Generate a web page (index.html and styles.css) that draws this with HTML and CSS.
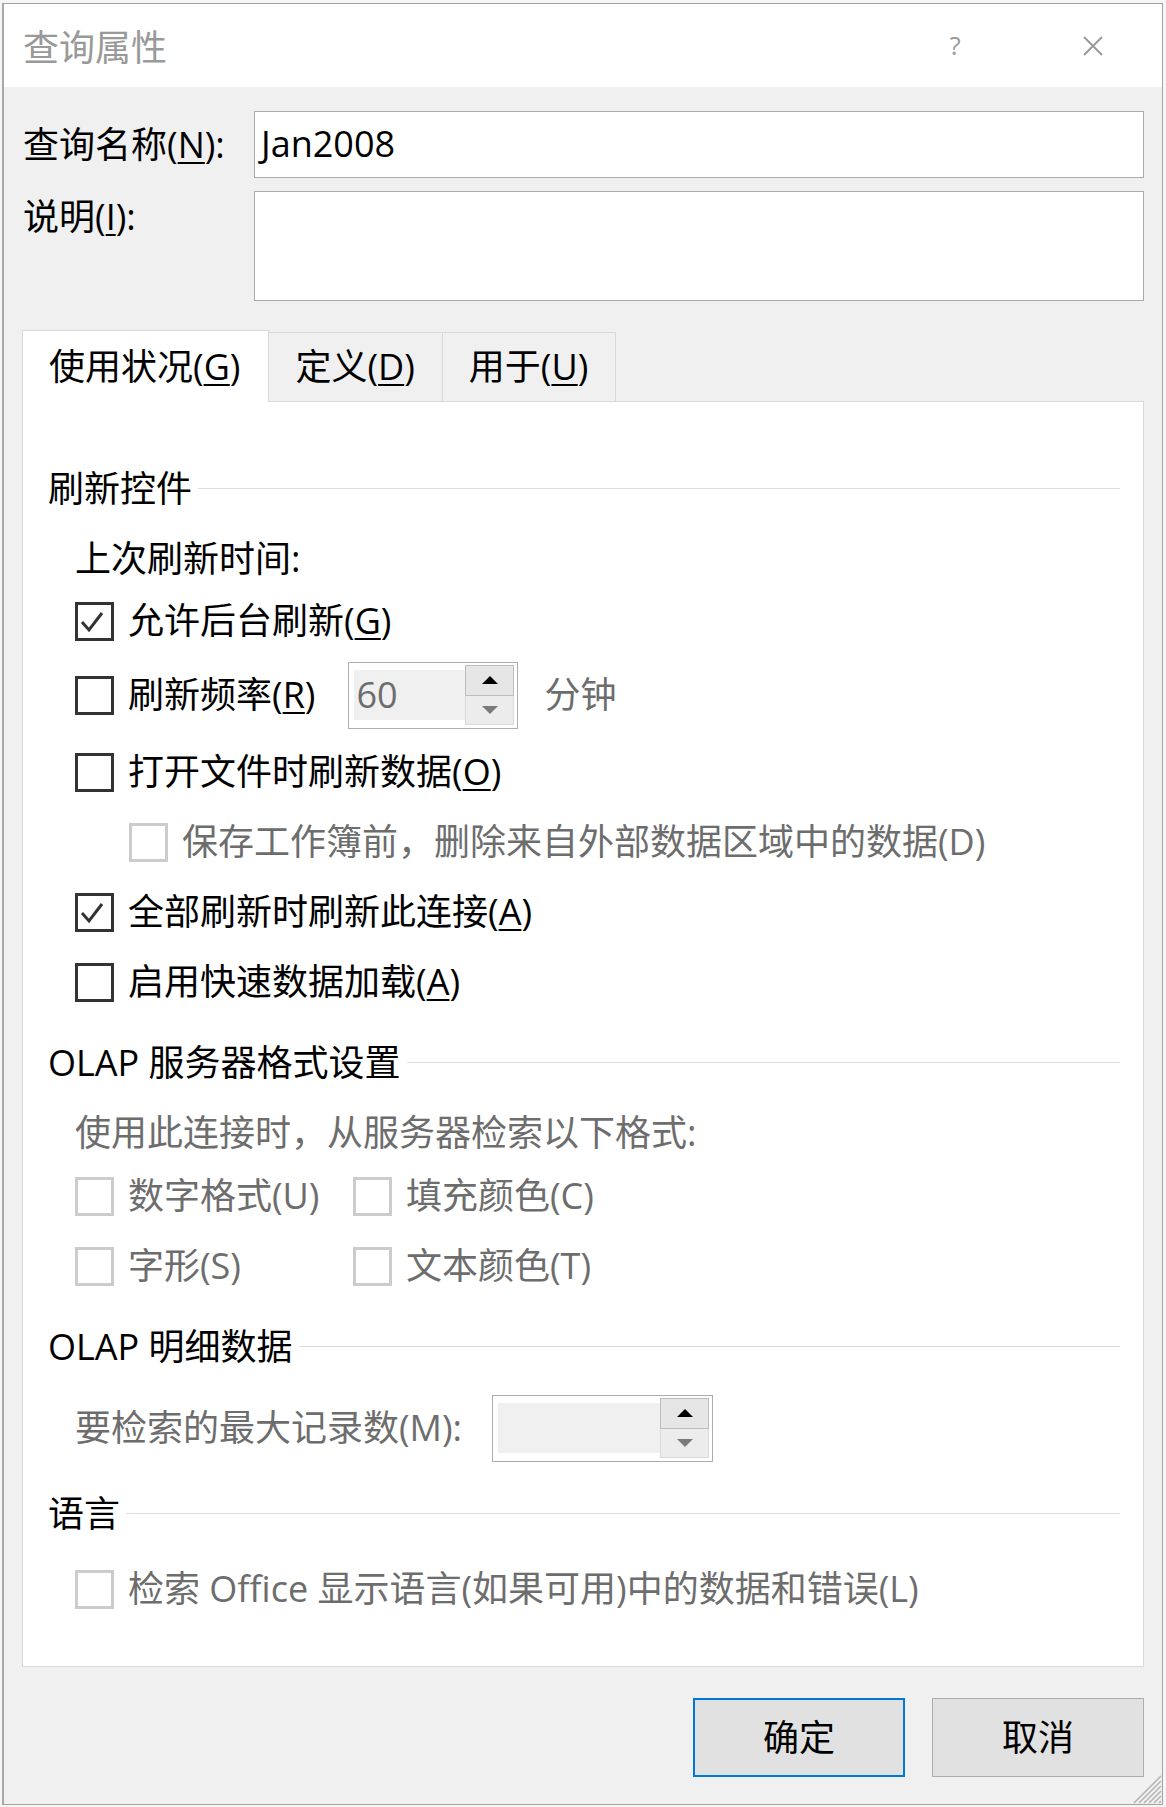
FILE: index.html
```html
<!DOCTYPE html>
<html lang="zh-CN">
<head>
    <meta charset="UTF-8">
    <title>查询属性</title>
    <link rel="stylesheet" href="styles.css">
</head>
<body>
    <div class="dialog">
        <div class="titlebar">
            <span class="title">查询属性</span>
            <span class="help">?</span>
            <span class="close">
                <svg width="20" height="20" viewBox="0 0 20 20"><path d="M1 1 L19 19 M19 1 L1 19" stroke="#9a9a9a" stroke-width="2" fill="none"/></svg>
            </span>
        </div>

        <div class="content">
            <div class="field-row">
                <label class="field-label">查询名称(<u>N</u>):</label>
                <div class="textbox">Jan2008</div>
            </div>
            <div class="field-row field-row-top">
                <label class="field-label">说明(<u>I</u>):</label>
                <div class="textbox textbox-multi"></div>
            </div>

            <div class="tabs">
                <div class="tab active">使用状况(<u>G</u>)</div>
                <div class="tab">定义(<u>D</u>)</div>
                <div class="tab">用于(<u>U</u>)</div>
            </div>

            <div class="panel">
                <div class="row group-title">刷新控件</div>
                <div class="row indent">上次刷新时间:</div>
                <div class="row indent up-8">
                    <span class="check"><svg width="33" height="33" viewBox="0 0 33 33"><polyline points="4,17 11,25 24,8" stroke="#333" stroke-width="3" fill="none"/></svg></span>
                    允许后台刷新(<u>G</u>)
                </div>
                <div class="row indent down-4">
                    <span class="check"></span>
                    刷新频率(<u>R</u>)
                    <div class="spin spin-refresh">
                        <div class="spin-field">60</div>
                        <div class="spin-btns">
                            <div class="spin-btn"><span class="arrow-up"></span></div>
                            <div class="spin-btn off"><span class="arrow-down"></span></div>
                        </div>
                    </div>
                    <span class="muted unit">分钟</span>
                </div>
                <div class="row indent down-7">
                    <span class="check"></span>
                    打开文件时刷新数据(<u>O</u>)
                </div>
                <div class="row indent-2 muted">
                    <span class="check disabled"></span>
                    保存工作簿前，删除来自外部数据区域中的数据(D)
                </div>
                <div class="row indent">
                    <span class="check"><svg width="33" height="33" viewBox="0 0 33 33"><polyline points="4,17 11,25 24,8" stroke="#333" stroke-width="3" fill="none"/></svg></span>
                    全部刷新时刷新此连接(<u>A</u>)
                </div>
                <div class="row indent">
                    <span class="check"></span>
                    启用快速数据加载(<u>A</u>)
                </div>

                <div class="row group-title down-11">OLAP 服务器格式设置</div>
                <div class="row indent muted">使用此连接时，从服务器检索以下格式:</div>
                <div class="row indent muted up-7">
                    <span class="check-col"><span class="check disabled"></span>数字格式(U)</span>
                    <span class="check disabled"></span>填充颜色(C)
                </div>
                <div class="row indent muted">
                    <span class="check-col"><span class="check disabled"></span>字形(S)</span>
                    <span class="check disabled"></span>文本颜色(T)
                </div>

                <div class="row group-title down-11">OLAP 明细数据</div>
                <div class="row indent muted down-11">
                    要检索的最大记录数(M):
                    <div class="spin spin-records">
                        <div class="spin-field"></div>
                        <div class="spin-btns">
                            <div class="spin-btn"><span class="arrow-up"></span></div>
                            <div class="spin-btn off"><span class="arrow-down"></span></div>
                        </div>
                    </div>
                </div>

                <div class="row group-title down-16">语言</div>
                <div class="row indent muted down-5">
                    <span class="check disabled"></span>
                    检索 Office 显示语言(如果可用)中的数据和错误(L)
                </div>
            </div>

            <div class="buttons">
                <div class="btn btn-default">确定</div>
                <div class="btn">取消</div>
            </div>
        </div>

        <svg class="grip" width="32" height="32" viewBox="0 0 32 32">
            <path d="M31 4 L4 31 M31 9 L9 31 M31 14 L14 31 M31 19 L19 31 M31 24 L24 31 M31 29 L29 31" stroke="#b4b4b4" stroke-width="1.5" fill="none"/>
        </svg>
    </div>
</body>
</html>
```

FILE: styles.css
```css
body { margin: 0; background: #f6f6f6; font-family: "Open Sans", "Noto Sans CJK SC", sans-serif; font-size: 36px; line-height: 1.2; color: #000; }
u { text-decoration-thickness: 2px; text-underline-offset: 4px; }

.dialog { position: relative; margin: 3px 0 0 2px; width: 1161px; height: 1802px; box-sizing: border-box; border: 1px solid #a3a3a3; border-left: 2px solid #a8a8a8; background: #f0f0f0; }

.titlebar { display: flex; align-items: center; height: 83px; padding-left: 19px; background: #fff; }
.title { color: #999; font-family: "Noto Sans CJK SC", sans-serif; }
.help { margin-left: auto; width: 40px; margin-right: 108px; text-align: center; font-size: 26px; color: #9a9a9a; }
.close { display: flex; margin-right: 59px; }

.content { padding: 24px 18px 0 18px; }
.field-row { display: flex; align-items: center; }
.field-row-top { align-items: flex-start; margin-top: 13px; }
.field-label { width: 231px; padding-left: 1px; }
.field-row-top .field-label { padding-top: 4px; }
.textbox { flex: 1; height: 67px; box-sizing: border-box; border: 1px solid #ababab; background: #fff; padding-left: 6px; line-height: 63px; }
.textbox-multi { height: 110px; }

.tabs { display: flex; align-items: flex-end; margin-top: 29px; }
.tab { height: 69px; box-sizing: border-box; padding: 0 27px 0 26px; border: 1px solid #d9d9d9; border-bottom: none; display: flex; align-items: center; margin-left: -1px; background: #f0f0f0; }
.tab.active { height: 72px; padding: 0 28px 0 26px; margin-left: 0; margin-bottom: -1px; background: #fff; position: relative; z-index: 1; }

.panel { height: 1266px; box-sizing: border-box; border: 1px solid #d9d9d9; background: #fff; padding: 52px 23px 0 25px; }
.row { display: flex; align-items: center; height: 70px; white-space: nowrap; }
.indent { padding-left: 27px; }
.indent-2 { padding-left: 81px; }
.muted { color: #6d6d6d; }
.up-8 { margin-top: -8px; }
.up-7 { margin-top: -7px; }
.down-4 { margin-top: 4px; }
.down-5 { margin-top: 5px; }
.down-7 { margin-top: 7px; }
.down-11 { margin-top: 11px; }
.down-16 { margin-top: 16px; }

.group-title::after { content: ""; flex: 1; border-top: 1px solid #dcdcdc; margin-left: 6px; margin-top: -2px; }

.check { flex: none; display: flex; width: 39px; height: 39px; box-sizing: border-box; border: 3px solid #333; margin-right: 14px; background: #fff; }
.check.disabled { border-color: #cccccc; }
.check-col { display: flex; align-items: center; width: 278px; }

.spin { display: flex; align-items: center; height: 67px; box-sizing: border-box; border: 1px solid #adadad; background: #fff; padding: 0 3px 0 5px; }
.spin-refresh { width: 170px; margin-left: 33px; }
.spin-records { width: 221px; margin-left: 30px; }
.spin-field { flex: 1; height: 50px; background: #f0f0f0; color: #6d6d6d; line-height: 50px; padding-left: 2px; }
.spin-btns { width: 49px; height: 60px; display: flex; flex-direction: column; }
.spin-btn { flex: 1; display: flex; align-items: center; justify-content: center; background: #e6e6e6; border: 1px solid #bdbdbd; }
.spin-btn.off { background: #ececec; border-color: #dadada; border-top: none; }
.arrow-up { border: 8px solid transparent; border-top: none; border-bottom: 8px solid #000; }
.arrow-down { border: 8px solid transparent; border-bottom: none; border-top: 8px solid #7a7a7a; }
.unit { margin-left: 26px; }

.buttons { display: flex; justify-content: flex-end; gap: 27px; margin-top: 31px; }
.btn { width: 212px; height: 79px; box-sizing: border-box; border: 1px solid #adadad; background: #e1e1e1; display: flex; align-items: center; justify-content: center; }
.btn-default { border: 2px solid #0078d7; }

.grip { position: absolute; right: 0; bottom: 0; }
```
